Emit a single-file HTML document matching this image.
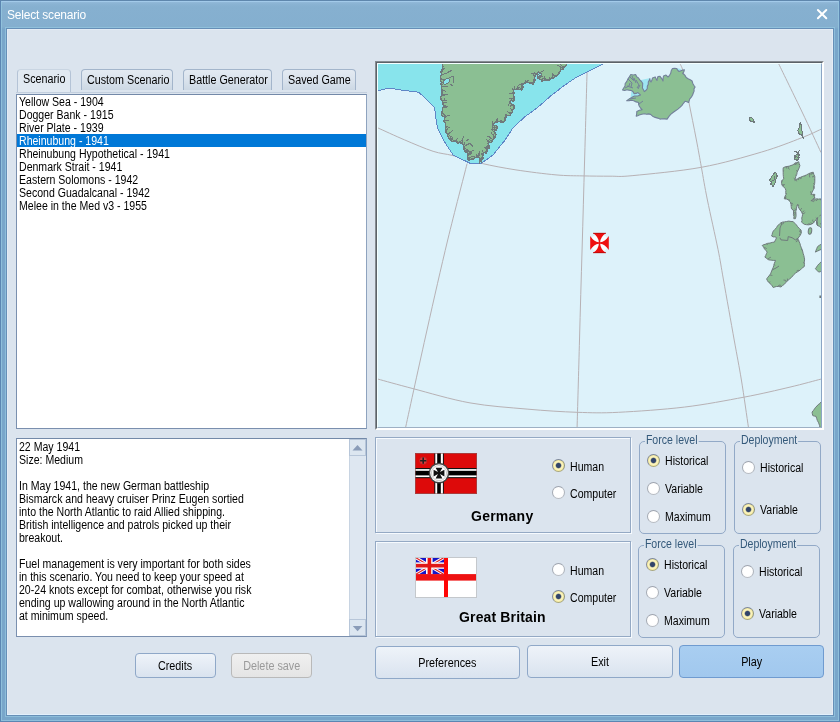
<!DOCTYPE html>
<html>
<head>
<meta charset="utf-8">
<title>Select scenario</title>
<style>
html,body{margin:0;padding:0;}
body{width:840px;height:722px;overflow:hidden;position:relative;background:#7ca6cb;font-family:"Liberation Sans",sans-serif;font-size:12px;line-height:13px;color:#000;letter-spacing:0;}
.abs{position:absolute;}
#frame{left:0;top:0;width:840px;height:722px;box-sizing:border-box;border:1px solid #5b86b2;border-top-color:#5f87ad;background:linear-gradient(180deg,#9dc4e6 0px,#92b9d9 1px,#8ab3d3 3px,#86b0d0 6px,#84afcf 26px,#79a6ca 28px,#79a6ca 100%);}
#frame-hl{left:1px;top:1px;width:838px;height:720px;box-sizing:border-box;border:1px solid rgba(150,200,225,0.75);border-top-color:rgba(170,210,240,0.6);}
#title{left:7px;top:8px;font-size:12px;line-height:15px;color:#fff;letter-spacing:-0.2px;white-space:nowrap;}
#client{left:7px;top:29px;width:826px;height:686px;background:#dbe4ee;box-shadow:0 0 0 1px #668fb7;box-sizing:border-box;border:1px solid #e3ecf5;border-bottom-color:#e2f0fc;}
#client-hl{left:7px;top:714px;width:826px;height:1px;background:#e2f0fc;}
#client-hr{left:832px;top:29px;width:1px;height:686px;background:#e6edf5;}
#frame-in{left:5px;top:27px;width:830px;height:690px;box-sizing:border-box;border:1px solid rgba(150,200,225,0.7);}
.tab{top:69px;height:21px;box-sizing:border-box;border:1px solid #a3b5cb;border-bottom:none;border-radius:4px 4px 0 0;background:linear-gradient(180deg,#e3eaf2 0%,#dae3ed 50%,#ccd8e4 100%);white-space:nowrap;}
.tab span{position:absolute;left:5px;top:4px;transform:scaleX(0.895);transform-origin:0 0;}
.tab.sel{top:69px;height:23px;background:#e1e9f1;border-color:#b4c3d6;border-top-color:#c9d5e2;}
.tab.sel span{top:3px;}
.box{background:#fff;box-sizing:border-box;border:1px solid #8ea3bf;border-top-color:#7389a8;border-left-color:#7a90af;border-bottom-color:#7a8fae;}
.row{left:0;width:349px;height:13px;line-height:15px;white-space:nowrap;padding-left:1.5px;box-sizing:border-box;}
.row.sel{background:#0078d7;color:#fff;}
.btn{box-sizing:border-box;border:1px solid #8fa8c8;border-radius:4px;background:linear-gradient(180deg,#eef3f9 0%,#e4ebf4 50%,#d9e3ef 100%);text-align:center;white-space:nowrap;}
.btn.dis{border-color:#b9b9b9;background:linear-gradient(180deg,#f0f0f0,#e4e4e4);color:#9a9a9a;}
.btn.def{border-color:#6f9bd0;background:linear-gradient(180deg,#a9cef1 0%,#a1c8ee 100%);}
.panel{box-sizing:border-box;border:1px solid #94a9c4;box-shadow:inset 1px 1px 0 0 #f6fafe,1px 1px 0 0 #f6fafe;}
.grp{box-sizing:border-box;border:1px solid #92a9c7;border-radius:5px;}
.grp .lbl{position:absolute;top:-8px;left:5px;padding:0 1px;transform:scaleX(0.88);transform-origin:0 0;background:#dbe4ee;color:#34597a;white-space:nowrap;}
.radio{width:13px;height:13px;box-sizing:border-box;border-radius:50%;border:1px solid #a4a9b2;border-color:#9ea4ae #aeb3ba #b8bcc2 #a4a9b2;background:radial-gradient(circle at 50% 45%,#ffffff 0%,#ffffff 55%,#f0f2f5 100%);}
.radio.on{border-color:#7d8798 #8e937f #a9a77e #84899a;background:radial-gradient(circle at 50% 50%,#31446a 0,#31446a 2.1px,#f7efb4 3.3px,#fbf4c0 4px,#f1e695 5.5px,#efe392 100%);}
.t{white-space:nowrap;transform:scaleX(0.88);transform-origin:0 0;}
.sx{display:inline-block;transform:scaleX(0.88);transform-origin:0 0;white-space:nowrap;}
.sc{display:inline-block;transform:scaleX(0.9);transform-origin:50% 0;white-space:nowrap;}
.bold{font-weight:bold;font-size:14px;line-height:16px;letter-spacing:0;white-space:nowrap;}
</style>
</head>
<body>
<div id="root" class="abs" style="left:0;top:0;width:840px;height:722px;will-change:transform;">
<div id="frame" class="abs"></div>
<div id="frame-hl" class="abs"></div>
<div id="title" class="abs">Select scenario</div>
<svg class="abs" style="left:816px;top:8px" width="13" height="13" viewBox="0 0 13 13"><path d="M1.9 2 L10.3 10.3 M10.3 2 L1.9 10.3" stroke="#fff" stroke-width="2" stroke-linecap="round" fill="none"/></svg>
<div id="frame-in" class="abs"></div>
<div id="client" class="abs"></div>
<div id="client-hl" class="abs"></div>
<div id="client-hr" class="abs"></div>

<!-- tabs -->
<div class="abs" style="left:16px;top:92px;width:351px;height:1px;background:#c3cfde"></div>
<div class="abs tab sel" style="left:17px;width:54px"><span>Scenario</span></div>
<div class="abs tab" style="left:81px;width:92px"><span>Custom Scenario</span></div>
<div class="abs tab" style="left:183px;width:89px"><span>Battle Generator</span></div>
<div class="abs tab" style="left:282px;width:74px"><span>Saved Game</span></div>

<!-- list -->
<div class="abs box" id="list" style="left:16px;top:94px;width:351px;height:335px;">
<div class="abs row" style="top:0"><span class="sx">Yellow Sea - 1904</span></div>
<div class="abs row" style="top:13px"><span class="sx">Dogger Bank - 1915</span></div>
<div class="abs row" style="top:26px"><span class="sx">River Plate - 1939</span></div>
<div class="abs row sel" style="top:39px"><span class="sx">Rheinubung - 1941</span></div>
<div class="abs row" style="top:52px"><span class="sx">Rheinubung Hypothetical - 1941</span></div>
<div class="abs row" style="top:65px"><span class="sx">Denmark Strait - 1941</span></div>
<div class="abs row" style="top:78px"><span class="sx">Eastern Solomons - 1942</span></div>
<div class="abs row" style="top:91px"><span class="sx">Second Guadalcanal - 1942</span></div>
<div class="abs row" style="top:104px"><span class="sx">Melee in the Med v3 - 1955</span></div>
</div>

<!-- description -->
<div class="abs box" id="desc" style="left:16px;top:438px;width:351px;height:199px;">
<div class="abs t" style="left:1.5px;top:2px;">22 May 1941<br>Size: Medium<br><br>In May 1941, the new German battleship<br>Bismarck and heavy cruiser Prinz Eugen sortied<br>into the North Atlantic to raid Allied shipping.<br>British intelligence and patrols picked up their<br>breakout.<br><br>Fuel management is very important for both sides<br>in this scenario. You need to keep your speed at<br>20-24 knots except for combat, otherwise you risk<br>ending up wallowing around in the North Atlantic<br>at minimum speed.</div>
<div class="abs" style="left:332px;top:0;width:17px;height:197px;background:#dee7f1;border-left:1px solid #c8d4e2;box-sizing:border-box;"></div>
<div class="abs" style="left:332px;top:0;width:17px;height:17px;background:#dce6f0;border:1px solid #b7c6d9;box-sizing:border-box;"></div>
<div class="abs" style="left:332px;top:180px;width:17px;height:17px;background:#dce6f0;border:1px solid #b7c6d9;box-sizing:border-box;"></div>
<svg class="abs" style="left:332px;top:0" width="17" height="197" viewBox="0 0 17 197"><path d="M3.5 11.5 L8.5 6 L13.5 11.5 Z" fill="#8a9cb8"/><path d="M3.8 187 L8.6 192.2 L13.4 187 Z" fill="#8a9cb8"/></svg>
</div>

<!-- small buttons -->
<div class="abs btn" style="left:135px;top:653px;width:81px;height:25px;line-height:25px;"><span class="sc">Credits</span></div>
<div class="abs btn dis" style="left:231px;top:653px;width:81px;height:25px;line-height:25px;"><span class="sc">Delete save</span></div>

<!-- MAP -->
<div class="abs" id="mapframe" style="left:375px;top:61px;width:449px;height:369px;box-sizing:border-box;border-top:1px solid #868c92;border-left:1px solid #868c92;border-right:1px solid #fff;border-bottom:1px solid #fff;"></div>
<div class="abs" style="left:376px;top:62px;width:447px;height:367px;box-sizing:border-box;border-top:1px solid #5c6268;border-left:1px solid #5c6268;border-right:1px solid #fff;border-bottom:1px solid #fff;"></div>
<div class="abs" style="left:377px;top:63px;width:445px;height:365px;box-sizing:border-box;border-top:1px solid #f4ffff;border-left:1px solid #f4ffff;border-right:1px solid #8ba5c5;border-bottom:1px solid #9db0c4;background:#ddf2fa"></div>
<svg class="abs" id="map" style="left:378px;top:64px" width="443" height="363" viewBox="378 64 443 363">
<!--MAPCONTENT-->
<path d="M467.1,163.6 C463.9,176.3 454.4,212.3 447.7,240.0 C441.0,267.7 434.0,298.8 427.0,330.0 C420.0,361.2 409.2,410.8 405.7,427.0" fill="none" stroke="#b7b1b4" stroke-width="1"/>
<path d="M587.3,64.0 C586.8,80.0 585.5,129.2 584.6,160.0 C583.7,190.8 583.0,219.0 582.1,249.0 C581.2,279.0 580.3,310.3 579.5,340.0 C578.7,369.7 577.5,412.5 577.1,427.0" fill="none" stroke="#b7b1b4" stroke-width="1"/>
<path d="M680.0,63.6 C680.6,65.2 682.1,66.8 683.5,73.0 C684.9,79.2 686.5,89.5 688.6,100.7 C690.8,111.9 694.3,128.9 696.4,140.0 C698.5,151.1 699.6,157.3 701.4,167.3 C703.2,177.3 704.6,186.3 707.4,200.0 C710.2,213.7 715.3,236.0 718.0,249.3 C720.7,262.6 720.8,264.9 723.5,280.0 C726.2,295.1 731.2,323.3 734.2,340.0 C737.2,356.7 739.0,365.5 741.4,380.0 C743.8,394.5 747.2,419.2 748.4,427.0" fill="none" stroke="#b7b1b4" stroke-width="1"/>
<path d="M778.6,63.6 C782.5,71.7 795.0,97.2 802.1,112.0 C809.2,126.8 817.9,145.8 821.0,152.5" fill="none" stroke="#b7b1b4" stroke-width="1"/>
<path d="M378.1,128.0 C382.5,130.0 395.4,136.0 404.6,139.9 C413.8,143.8 425.0,148.7 433.1,151.3 C441.2,153.9 445.0,153.6 453.1,155.6 C461.2,157.6 471.2,161.0 481.7,163.4 C492.2,165.8 503.6,168.0 516.0,169.9 C528.4,171.8 544.9,173.9 556.0,174.9 C567.1,175.9 573.9,175.7 582.9,175.9 C591.9,176.1 601.7,176.2 610.0,176.2 C618.3,176.1 617.7,177.1 632.9,175.6 C648.1,174.1 680.0,171.2 701.4,167.3 C722.8,163.4 744.7,157.0 761.4,152.1 C778.1,147.2 791.5,141.7 801.4,137.9 C811.3,134.1 817.7,130.7 821.0,129.3" fill="none" stroke="#b7b1b4" stroke-width="1"/>
<path d="M378.0,379.1 C383.8,380.7 397.6,384.6 412.9,388.6 C428.2,392.6 451.0,399.5 470.0,402.9 C489.0,406.3 509.2,407.5 527.1,409.1 C545.0,410.7 561.9,411.8 577.1,412.3 C592.4,412.8 600.7,413.2 618.6,412.3 C636.5,411.4 663.3,409.6 684.3,407.1 C705.2,404.6 726.7,400.4 744.3,397.1 C761.9,393.8 777.2,390.1 790.0,387.1 C802.8,384.1 815.8,380.4 821.0,379.1" fill="none" stroke="#b7b1b4" stroke-width="1"/>
<polygon points="378,64 378.0,90.6 388.9,88.1 400.3,89.9 418.9,92.3 434.6,107.4 436.0,119.1 437.7,128.4 444.6,142.0 453.1,154.9 467.4,162.0 469.6,163.1 481.7,163.1 493.1,154.9 496.0,151.3 504.6,140.6 513.1,127.7 524.6,117.0 537.4,107.7 550.3,96.3 563.1,86.3 574.6,78.4 587.4,72.0 603.1,64.0 603.1,64" fill="#88e4ec"/>
<polyline points="378.0,90.6 388.9,88.1 400.3,89.9 418.9,92.3 434.6,107.4 436.0,119.1 437.7,128.4 444.6,142.0 453.1,154.9 467.4,162.0 469.6,163.1 481.7,163.1 493.1,154.9 496.0,151.3 504.6,140.6 513.1,127.7 524.6,117.0 537.4,107.7 550.3,96.3 563.1,86.3 574.6,78.4 587.4,72.0 603.1,64.0" fill="none" stroke="#5f86c6" stroke-width="1" shape-rendering="crispEdges"/>
<g shape-rendering="crispEdges">
<polygon points="442.4,64.0 442.5,66.1 442.6,68.1 441.5,70.0 440.9,72.1 442.0,74.3 440.7,76.4 440.8,78.5 440.3,80.6 441.5,82.4 440.8,84.4 442.0,86.2 441.4,88.2 442.4,90.0 441.7,92.0 442.4,93.9 441.5,95.6 440.5,97.3 441.0,99.1 442.5,100.6 443.0,102.5 442.9,104.6 443.9,106.3 442.3,107.7 442.5,109.8 442.2,111.7 441.4,113.4 441.6,115.8 444.4,116.7 444.6,119.1 443.9,121.1 445.3,122.9 445.7,124.8 445.9,126.7 445.6,128.7 445.3,130.6 445.5,132.6 447.6,133.6 447.6,135.7 448.4,137.4 449.7,138.8 450.3,140.6 452.0,141.4 454.2,141.1 456.0,141.8 457.4,143.4 459.0,142.5 460.8,143.3 462.4,142.7 463.1,144.6 463.9,146.5 463.9,148.7 464.6,150.6 465.8,152.0 467.3,153.2 468.1,154.9 467.7,156.9 468.2,158.8 468.9,160.6 470.4,159.6 472.3,159.8 473.9,159.1 474.9,157.7 476.5,156.8 476.7,154.9 477.5,157.0 479.6,158.2 479.6,160.8 481.7,162.0 481.6,159.9 483.1,158.4 482.7,156.8 483.2,155.0 482.4,153.4 484.2,152.6 486.0,153.4 486.9,151.7 487.1,149.6 488.9,148.4 489.0,146.7 488.9,145.0 488.1,143.4 489.6,142.6 491.4,142.2 492.4,140.6 493.0,139.0 494.6,138.0 495.3,136.4 496.0,134.9 495.1,133.0 493.9,131.3 495.0,130.0 496.8,129.4 497.4,127.7 496.3,125.7 494.0,125.3 492.4,124.1 494.2,123.7 495.3,121.8 497.5,122.4 498.9,121.3 500.9,122.0 503.1,122.0 505.0,120.6 505.7,118.5 506.0,116.3 508.1,115.5 510.3,115.6 511.0,113.9 512.4,112.5 512.1,110.2 513.9,109.1 513.8,107.0 513.9,104.9 512.1,104.5 510.6,103.7 509.6,102.0 510.9,100.4 513.2,101.1 514.6,99.9 513.5,98.2 513.5,96.4 513.6,94.6 514.4,92.7 513.3,91.0 514.3,89.5 516.0,89.6 517.4,89.1 519.5,89.6 521.7,89.9 522.8,88.1 522.9,86.1 522.4,84.1 524.6,83.7 526.0,82.0 527.9,82.1 529.6,82.9 531.4,83.3 533.1,84.1 534.4,82.2 535.1,80.1 534.6,77.7 535.1,75.8 536.2,74.4 537.4,73.1 538.9,72.0 540.7,73.0 541.7,74.9 540.3,76.1 538.7,77.1 537.4,78.4 539.1,78.9 540.9,79.4 541.7,81.3 543.4,80.7 545.1,80.1 546.9,80.1 548.8,80.5 550.3,79.1 552.4,78.5 554.1,77.3 556.0,76.3 557.6,74.8 559.2,73.2 560.3,71.3 560.5,69.5 562.9,69.4 563.1,67.7 564.7,66.9 566.1,65.8 566.7,64.0" fill="#8bbf93"/>
<polyline points="442.4,64.0 442.5,66.1 442.6,68.1 441.5,70.0 440.9,72.1 442.0,74.3 440.7,76.4 440.8,78.5 440.3,80.6 441.5,82.4 440.8,84.4 442.0,86.2 441.4,88.2 442.4,90.0 441.7,92.0 442.4,93.9 441.5,95.6 440.5,97.3 441.0,99.1 442.5,100.6 443.0,102.5 442.9,104.6 443.9,106.3 442.3,107.7 442.5,109.8 442.2,111.7 441.4,113.4 441.6,115.8 444.4,116.7 444.6,119.1 443.9,121.1 445.3,122.9 445.7,124.8 445.9,126.7 445.6,128.7 445.3,130.6 445.5,132.6 447.6,133.6 447.6,135.7 448.4,137.4 449.7,138.8 450.3,140.6 452.0,141.4 454.2,141.1 456.0,141.8 457.4,143.4 459.0,142.5 460.8,143.3 462.4,142.7 463.1,144.6 463.9,146.5 463.9,148.7 464.6,150.6 465.8,152.0 467.3,153.2 468.1,154.9 467.7,156.9 468.2,158.8 468.9,160.6 470.4,159.6 472.3,159.8 473.9,159.1 474.9,157.7 476.5,156.8 476.7,154.9 477.5,157.0 479.6,158.2 479.6,160.8 481.7,162.0 481.6,159.9 483.1,158.4 482.7,156.8 483.2,155.0 482.4,153.4 484.2,152.6 486.0,153.4 486.9,151.7 487.1,149.6 488.9,148.4 489.0,146.7 488.9,145.0 488.1,143.4 489.6,142.6 491.4,142.2 492.4,140.6 493.0,139.0 494.6,138.0 495.3,136.4 496.0,134.9 495.1,133.0 493.9,131.3 495.0,130.0 496.8,129.4 497.4,127.7 496.3,125.7 494.0,125.3 492.4,124.1 494.2,123.7 495.3,121.8 497.5,122.4 498.9,121.3 500.9,122.0 503.1,122.0 505.0,120.6 505.7,118.5 506.0,116.3 508.1,115.5 510.3,115.6 511.0,113.9 512.4,112.5 512.1,110.2 513.9,109.1 513.8,107.0 513.9,104.9 512.1,104.5 510.6,103.7 509.6,102.0 510.9,100.4 513.2,101.1 514.6,99.9 513.5,98.2 513.5,96.4 513.6,94.6 514.4,92.7 513.3,91.0 514.3,89.5 516.0,89.6 517.4,89.1 519.5,89.6 521.7,89.9 522.8,88.1 522.9,86.1 522.4,84.1 524.6,83.7 526.0,82.0 527.9,82.1 529.6,82.9 531.4,83.3 533.1,84.1 534.4,82.2 535.1,80.1 534.6,77.7 535.1,75.8 536.2,74.4 537.4,73.1 538.9,72.0 540.7,73.0 541.7,74.9 540.3,76.1 538.7,77.1 537.4,78.4 539.1,78.9 540.9,79.4 541.7,81.3 543.4,80.7 545.1,80.1 546.9,80.1 548.8,80.5 550.3,79.1 552.4,78.5 554.1,77.3 556.0,76.3 557.6,74.8 559.2,73.2 560.3,71.3 560.5,69.5 562.9,69.4 563.1,67.7 564.7,66.9 566.1,65.8 566.7,64.0" fill="none" stroke="#6f7a7c" stroke-width="1.4" stroke-linejoin="round"/>
<polyline points="442.5,67.1 444.3,66.7" fill="none" stroke="#6f7a7c" stroke-width="1"/>
<polyline points="442.0,69.1 444.2,68.5 445.0,67.8" fill="none" stroke="#6f7a7c" stroke-width="1"/>
<polyline points="441.2,71.0 443.0,70.4 443.1,68.1" fill="none" stroke="#6f7a7c" stroke-width="1"/>
<polyline points="441.4,73.2 442.6,71.1 442.8,70.0" fill="none" stroke="#6f7a7c" stroke-width="1"/>
<polyline points="440.6,79.6 442.3,80.0 443.7,79.7" fill="none" stroke="#6f7a7c" stroke-width="1"/>
<polyline points="441.1,83.4 445.4,81.1" fill="none" stroke="#6f7a7c" stroke-width="1"/>
<polyline points="441.4,85.3 442.7,84.5" fill="none" stroke="#6f7a7c" stroke-width="1"/>
<polyline points="442.1,91.0 444.8,90.7 446.3,91.7" fill="none" stroke="#6f7a7c" stroke-width="1"/>
<polyline points="442.0,94.7 446.3,94.7" fill="none" stroke="#6f7a7c" stroke-width="1"/>
<polyline points="442.8,101.5 445.1,99.2 444.8,98.3" fill="none" stroke="#6f7a7c" stroke-width="1"/>
<polyline points="443.0,103.5 446.6,102.1" fill="none" stroke="#6f7a7c" stroke-width="1"/>
<polyline points="443.4,105.5 448.2,106.7" fill="none" stroke="#6f7a7c" stroke-width="1"/>
<polyline points="443.1,107.0 445.3,107.7 447.1,107.0" fill="none" stroke="#6f7a7c" stroke-width="1"/>
<polyline points="441.8,112.6 445.0,115.4 446.0,117.6" fill="none" stroke="#6f7a7c" stroke-width="1"/>
<polyline points="444.5,117.9 447.9,115.3 450.3,115.4" fill="none" stroke="#6f7a7c" stroke-width="1"/>
<polyline points="444.3,120.1 449.0,120.8" fill="none" stroke="#6f7a7c" stroke-width="1"/>
<polyline points="444.6,122.0 445.1,120.0" fill="none" stroke="#6f7a7c" stroke-width="1"/>
<polyline points="445.8,125.8 450.2,128.1" fill="none" stroke="#6f7a7c" stroke-width="1"/>
<polyline points="445.8,127.7 447.7,128.2 448.0,130.1" fill="none" stroke="#6f7a7c" stroke-width="1"/>
<polyline points="445.5,129.6 447.2,132.1" fill="none" stroke="#6f7a7c" stroke-width="1"/>
<polyline points="446.6,133.1 446.6,130.6 446.9,129.2" fill="none" stroke="#6f7a7c" stroke-width="1"/>
<polyline points="447.6,134.6 451.2,131.7 452.6,130.4" fill="none" stroke="#6f7a7c" stroke-width="1"/>
<polyline points="449.0,138.1 452.3,138.1" fill="none" stroke="#6f7a7c" stroke-width="1"/>
<polyline points="450.0,139.7 451.2,136.9 449.6,135.4" fill="none" stroke="#6f7a7c" stroke-width="1"/>
<polyline points="451.2,141.0 452.7,137.3" fill="none" stroke="#6f7a7c" stroke-width="1"/>
<polyline points="453.1,141.3 452.8,137.8" fill="none" stroke="#6f7a7c" stroke-width="1"/>
<polyline points="455.1,141.5 456.2,139.4 457.8,138.6" fill="none" stroke="#6f7a7c" stroke-width="1"/>
<polyline points="456.7,142.6 461.2,141.4" fill="none" stroke="#6f7a7c" stroke-width="1"/>
<polyline points="458.2,143.0 456.6,140.1" fill="none" stroke="#6f7a7c" stroke-width="1"/>
<polyline points="459.9,142.9 461.3,140.1" fill="none" stroke="#6f7a7c" stroke-width="1"/>
<polyline points="461.6,143.0 463.0,138.4 464.1,136.3" fill="none" stroke="#6f7a7c" stroke-width="1"/>
<polyline points="463.5,145.6 465.0,142.9 464.8,141.8" fill="none" stroke="#6f7a7c" stroke-width="1"/>
<polyline points="463.9,147.6 467.9,149.9 468.9,151.6" fill="none" stroke="#6f7a7c" stroke-width="1"/>
<polyline points="464.2,149.6 468.9,151.2 469.1,152.8" fill="none" stroke="#6f7a7c" stroke-width="1"/>
<polyline points="465.2,151.3 469.6,151.9 471.4,151.9" fill="none" stroke="#6f7a7c" stroke-width="1"/>
<polyline points="466.6,152.6 467.0,150.0" fill="none" stroke="#6f7a7c" stroke-width="1"/>
<polyline points="467.7,154.0 470.5,153.0 472.0,151.7" fill="none" stroke="#6f7a7c" stroke-width="1"/>
<polyline points="467.9,155.9 472.0,153.1" fill="none" stroke="#6f7a7c" stroke-width="1"/>
<polyline points="468.5,159.7 469.7,158.5" fill="none" stroke="#6f7a7c" stroke-width="1"/>
<polyline points="469.7,160.1 466.8,159.2" fill="none" stroke="#6f7a7c" stroke-width="1"/>
<polyline points="473.1,159.4 469.1,156.9" fill="none" stroke="#6f7a7c" stroke-width="1"/>
<polyline points="474.4,158.4 472.7,158.6" fill="none" stroke="#6f7a7c" stroke-width="1"/>
<polyline points="475.7,157.2 471.0,156.1" fill="none" stroke="#6f7a7c" stroke-width="1"/>
<polyline points="477.1,155.9 478.8,156.4" fill="none" stroke="#6f7a7c" stroke-width="1"/>
<polyline points="478.6,157.6 479.4,154.2" fill="none" stroke="#6f7a7c" stroke-width="1"/>
<polyline points="479.6,159.5 482.2,157.4 482.2,156.2" fill="none" stroke="#6f7a7c" stroke-width="1"/>
<polyline points="480.6,161.4 480.6,158.8 481.4,157.6" fill="none" stroke="#6f7a7c" stroke-width="1"/>
<polyline points="481.7,160.9 479.4,162.5 479.1,163.5" fill="none" stroke="#6f7a7c" stroke-width="1"/>
<polyline points="482.4,159.1 481.0,157.5" fill="none" stroke="#6f7a7c" stroke-width="1"/>
<polyline points="482.9,155.9 481.0,153.6" fill="none" stroke="#6f7a7c" stroke-width="1"/>
<polyline points="483.3,153.0 481.8,149.4" fill="none" stroke="#6f7a7c" stroke-width="1"/>
<polyline points="485.1,153.0 488.4,150.9" fill="none" stroke="#6f7a7c" stroke-width="1"/>
<polyline points="486.5,152.6 484.8,152.2 483.3,153.7" fill="none" stroke="#6f7a7c" stroke-width="1"/>
<polyline points="487.0,150.6 485.5,151.6" fill="none" stroke="#6f7a7c" stroke-width="1"/>
<polyline points="488.9,147.5 486.7,148.3 485.6,148.8" fill="none" stroke="#6f7a7c" stroke-width="1"/>
<polyline points="489.0,145.8 484.6,148.0" fill="none" stroke="#6f7a7c" stroke-width="1"/>
<polyline points="488.5,144.2 485.7,148.2 485.4,149.1" fill="none" stroke="#6f7a7c" stroke-width="1"/>
<polyline points="488.9,143.0 487.2,140.2 486.7,139.3" fill="none" stroke="#6f7a7c" stroke-width="1"/>
<polyline points="490.5,142.4 488.2,140.7 486.9,141.4" fill="none" stroke="#6f7a7c" stroke-width="1"/>
<polyline points="491.9,141.4 489.3,139.3" fill="none" stroke="#6f7a7c" stroke-width="1"/>
<polyline points="492.7,139.8 489.2,136.8 486.8,136.1" fill="none" stroke="#6f7a7c" stroke-width="1"/>
<polyline points="493.8,138.5 493.2,134.8 494.7,132.9" fill="none" stroke="#6f7a7c" stroke-width="1"/>
<polyline points="494.9,137.2 492.1,133.9 491.0,132.5" fill="none" stroke="#6f7a7c" stroke-width="1"/>
<polyline points="494.4,130.7 493.9,126.8" fill="none" stroke="#6f7a7c" stroke-width="1"/>
<polyline points="495.9,129.7 494.1,129.0 492.2,130.2" fill="none" stroke="#6f7a7c" stroke-width="1"/>
<polyline points="497.1,128.6 494.0,126.5" fill="none" stroke="#6f7a7c" stroke-width="1"/>
<polyline points="496.9,126.7 496.1,130.9" fill="none" stroke="#6f7a7c" stroke-width="1"/>
<polyline points="495.2,125.5 494.3,129.2 493.4,130.2" fill="none" stroke="#6f7a7c" stroke-width="1"/>
<polyline points="493.2,124.7 492.3,128.7 490.5,130.4" fill="none" stroke="#6f7a7c" stroke-width="1"/>
<polyline points="493.3,123.9 492.0,121.0" fill="none" stroke="#6f7a7c" stroke-width="1"/>
<polyline points="496.4,122.1 497.2,120.6 497.1,118.5" fill="none" stroke="#6f7a7c" stroke-width="1"/>
<polyline points="498.2,121.9 497.4,120.5 495.6,119.6" fill="none" stroke="#6f7a7c" stroke-width="1"/>
<polyline points="499.9,121.6 501.4,119.6" fill="none" stroke="#6f7a7c" stroke-width="1"/>
<polyline points="502.0,122.0 501.9,120.1" fill="none" stroke="#6f7a7c" stroke-width="1"/>
<polyline points="504.1,121.3 505.2,116.6 505.5,114.4" fill="none" stroke="#6f7a7c" stroke-width="1"/>
<polyline points="505.8,117.4 503.7,118.0" fill="none" stroke="#6f7a7c" stroke-width="1"/>
<polyline points="507.0,115.9 506.6,113.9" fill="none" stroke="#6f7a7c" stroke-width="1"/>
<polyline points="510.6,114.7 508.7,112.1" fill="none" stroke="#6f7a7c" stroke-width="1"/>
<polyline points="511.7,113.2 507.3,111.6" fill="none" stroke="#6f7a7c" stroke-width="1"/>
<polyline points="512.3,111.4 510.6,114.2" fill="none" stroke="#6f7a7c" stroke-width="1"/>
<polyline points="513.0,109.7 510.5,108.7 510.1,107.7" fill="none" stroke="#6f7a7c" stroke-width="1"/>
<polyline points="513.0,104.7 509.7,107.0" fill="none" stroke="#6f7a7c" stroke-width="1"/>
<polyline points="511.3,104.1 510.5,106.8" fill="none" stroke="#6f7a7c" stroke-width="1"/>
<polyline points="510.1,102.8 507.9,104.9 508.3,106.0" fill="none" stroke="#6f7a7c" stroke-width="1"/>
<polyline points="512.0,100.8 514.1,99.7 515.3,99.1" fill="none" stroke="#6f7a7c" stroke-width="1"/>
<polyline points="513.9,100.5 514.4,96.0" fill="none" stroke="#6f7a7c" stroke-width="1"/>
<polyline points="514.1,99.1 509.3,98.2" fill="none" stroke="#6f7a7c" stroke-width="1"/>
<polyline points="513.5,97.3 510.7,100.3" fill="none" stroke="#6f7a7c" stroke-width="1"/>
<polyline points="514.0,93.6 512.3,93.6" fill="none" stroke="#6f7a7c" stroke-width="1"/>
<polyline points="513.8,91.8 511.6,93.4 509.2,93.5" fill="none" stroke="#6f7a7c" stroke-width="1"/>
<polyline points="513.8,90.3 512.1,88.3" fill="none" stroke="#6f7a7c" stroke-width="1"/>
<polyline points="515.1,89.6 514.1,87.8 514.8,86.2" fill="none" stroke="#6f7a7c" stroke-width="1"/>
<polyline points="516.7,89.4 518.5,84.7" fill="none" stroke="#6f7a7c" stroke-width="1"/>
<polyline points="518.5,89.4 517.9,87.6 516.6,87.3" fill="none" stroke="#6f7a7c" stroke-width="1"/>
<polyline points="520.6,89.8 521.8,85.3" fill="none" stroke="#6f7a7c" stroke-width="1"/>
<polyline points="522.2,89.0 519.1,87.8 518.0,87.8" fill="none" stroke="#6f7a7c" stroke-width="1"/>
<polyline points="522.8,87.1 521.6,85.6" fill="none" stroke="#6f7a7c" stroke-width="1"/>
<polyline points="522.6,85.1 520.6,84.2 519.0,84.5" fill="none" stroke="#6f7a7c" stroke-width="1"/>
<polyline points="523.5,83.9 526.2,80.4" fill="none" stroke="#6f7a7c" stroke-width="1"/>
<polyline points="525.3,82.9 521.4,83.5" fill="none" stroke="#6f7a7c" stroke-width="1"/>
<polyline points="527.0,82.0 527.2,80.6 529.3,79.8" fill="none" stroke="#6f7a7c" stroke-width="1"/>
<polyline points="532.3,83.7 531.8,81.7" fill="none" stroke="#6f7a7c" stroke-width="1"/>
<polyline points="533.8,83.1 533.0,79.2" fill="none" stroke="#6f7a7c" stroke-width="1"/>
<polyline points="534.8,78.9 533.2,79.1" fill="none" stroke="#6f7a7c" stroke-width="1"/>
<polyline points="534.8,76.8 532.8,73.6 531.4,73.5" fill="none" stroke="#6f7a7c" stroke-width="1"/>
<polyline points="535.6,75.1 534.7,73.5 533.8,71.8" fill="none" stroke="#6f7a7c" stroke-width="1"/>
<polyline points="536.8,73.7 533.2,73.0 531.6,73.4" fill="none" stroke="#6f7a7c" stroke-width="1"/>
<polyline points="539.8,72.5 542.8,71.4 544.2,69.4" fill="none" stroke="#6f7a7c" stroke-width="1"/>
<polyline points="541.2,74.0 542.3,72.8" fill="none" stroke="#6f7a7c" stroke-width="1"/>
<polyline points="541.0,75.5 542.8,77.1" fill="none" stroke="#6f7a7c" stroke-width="1"/>
<polyline points="538.1,77.7 540.7,77.6" fill="none" stroke="#6f7a7c" stroke-width="1"/>
<polyline points="538.3,78.7 537.2,74.5" fill="none" stroke="#6f7a7c" stroke-width="1"/>
<polyline points="540.0,79.2 538.8,74.4 539.4,73.3" fill="none" stroke="#6f7a7c" stroke-width="1"/>
<polyline points="541.3,80.4 543.8,80.5" fill="none" stroke="#6f7a7c" stroke-width="1"/>
<polyline points="542.5,81.0 540.7,79.6" fill="none" stroke="#6f7a7c" stroke-width="1"/>
<polyline points="544.2,80.4 545.2,78.6 544.7,76.2" fill="none" stroke="#6f7a7c" stroke-width="1"/>
<polyline points="546.0,80.1 544.7,79.0 545.1,76.7" fill="none" stroke="#6f7a7c" stroke-width="1"/>
<polyline points="547.9,80.3 552.1,78.1 552.9,75.9" fill="none" stroke="#6f7a7c" stroke-width="1"/>
<polyline points="549.6,79.8 545.7,79.9 544.3,80.4" fill="none" stroke="#6f7a7c" stroke-width="1"/>
<polyline points="551.3,78.8 549.1,77.8 549.0,76.6" fill="none" stroke="#6f7a7c" stroke-width="1"/>
<polyline points="555.1,76.8 552.1,73.5" fill="none" stroke="#6f7a7c" stroke-width="1"/>
<polyline points="556.8,75.6 553.7,75.5 553.0,74.4" fill="none" stroke="#6f7a7c" stroke-width="1"/>
<polyline points="558.4,74.0 558.3,72.4" fill="none" stroke="#6f7a7c" stroke-width="1"/>
<polyline points="561.7,69.5 560.4,68.3" fill="none" stroke="#6f7a7c" stroke-width="1"/>
<polyline points="563.0,68.6 559.1,66.0 556.7,65.9" fill="none" stroke="#6f7a7c" stroke-width="1"/>
<polyline points="563.9,67.3 560.8,64.8 559.8,64.6" fill="none" stroke="#6f7a7c" stroke-width="1"/>
<ellipse cx="446.3" cy="81.5" rx="3.6" ry="2.2" transform="rotate(-30 446.3 81.5)" fill="#88e4ec" stroke="#6f7a7c" stroke-width="1"/>
<polyline points="441.0,75.0 447.0,73.0 452.0,70.0" fill="none" stroke="#6f7a7c" stroke-width="1.1"/>
<polyline points="449.0,78.0 453.0,76.0 454.0,83.0" fill="none" stroke="#6f7a7c" stroke-width="1.1"/>
<polyline points="450.0,84.0 453.0,86.0" fill="none" stroke="#6f7a7c" stroke-width="1.1"/>
<polyline points="441.0,86.0 448.0,87.0" fill="none" stroke="#6f7a7c" stroke-width="1.1"/>
<polyline points="442.0,96.0 448.0,94.0" fill="none" stroke="#6f7a7c" stroke-width="1.1"/>
<polyline points="441.0,100.0 447.0,101.0" fill="none" stroke="#6f7a7c" stroke-width="1.1"/>
<polyline points="465.0,146.0 470.0,143.0 473.0,147.0" fill="none" stroke="#6f7a7c" stroke-width="1.1"/>
<polyline points="466.0,141.0 469.0,139.0" fill="none" stroke="#6f7a7c" stroke-width="1.1"/>
<polyline points="470.0,152.0 474.0,150.0" fill="none" stroke="#6f7a7c" stroke-width="1.1"/>
<polyline points="478.0,156.0 480.0,151.0" fill="none" stroke="#6f7a7c" stroke-width="1.1"/>
<polyline points="551.0,79.0 554.0,74.0" fill="none" stroke="#6f7a7c" stroke-width="1.1"/>
<polyline points="540.0,80.0 545.0,78.0" fill="none" stroke="#6f7a7c" stroke-width="1.1"/>
</g>
<polygon points="641,80 650.5,78 650,84 647,92 642,92.5 641.5,86" fill="#9fe6f2"/>
<polygon points="631.5,90.5 638.5,92 641,95.5 634.6,96.5 630.5,98" fill="#9fe6f2"/>
<polygon points="676,68 681,69 680,73 676,72" fill="#9fe6f2"/>
<polygon points="622.5,90.0 623.7,88.0 625.0,86.0 625.2,83.5 626.7,81.6 627.8,79.1 629.4,76.9 630.8,74.5 633.2,75.0 635.6,74.5 636.6,76.6 638.5,78.0 639.8,79.9 641.4,81.5 642.7,83.4 642.6,85.7 642.4,88.0 643.4,89.8 644.3,91.6 646.1,90.3 647.3,88.5 647.3,86.3 648.3,84.2 648.3,82.0 649.3,80.4 649.8,78.7 650.1,80.5 651.0,82.0 652.0,80.1 652.5,78.0 655.2,76.9 656.0,78.7 657.0,80.5 657.3,78.5 658.0,76.5 660.0,76.3 661.7,78.6 663.0,81.0 663.1,78.5 663.5,76.0 666.0,75.1 668.0,77.0 669.6,75.3 670.7,73.3 671.2,70.8 672.5,68.5 674.6,68.2 676.7,68.5 677.6,70.2 679.0,71.5 681.6,70.4 684.4,69.7 683.9,71.7 682.6,73.3 684.8,75.1 686.2,77.5 688.1,78.7 690.2,79.7 692.1,81.0 692.7,83.2 693.8,85.2 695.1,87.0 694.0,88.9 694.1,91.1 693.3,93.0 692.5,95.2 691.3,97.1 689.8,98.9 689.2,100.7 688.6,102.5 686.9,101.7 685.0,101.3 683.4,103.3 682.0,105.4 680.2,107.2 677.9,109.1 675.5,110.8 673.0,112.5 670.7,114.4 668.8,116.6 667.1,119.1 664.7,118.9 662.4,118.8 660.0,119.1 657.7,118.1 655.2,117.4 652.6,116.2 650.5,114.4 648.5,113.9 646.5,114.2 644.5,113.8 641.8,114.3 639.2,115.0 637.7,115.7 636.2,116.2 636.7,113.8 636.8,111.4 639.4,110.2 642.1,109.6 640.5,108.0 639.2,106.0 638.6,104.3 638.6,102.5 636.1,101.9 633.8,100.7 631.4,100.3 629.1,100.6 626.7,100.7 629.0,99.1 631.4,97.7 633.0,96.8 634.6,96.0 637.6,96.0 640.5,95.0 639.3,93.8 638.0,92.6 636.1,93.4 634.0,93.6 633.3,92.0 632.0,90.8 630.5,90.4 629.0,90.3 626.9,89.7 624.6,90.5" fill="#8bbf93" stroke="#73809a" stroke-width="1.1" stroke-linejoin="round"/>
<polyline points="628.0,79.0 632.0,83.0 631.0,87.0" fill="none" stroke="#73809a" stroke-width="1"/>
<polyline points="634.0,78.0 636.0,83.0" fill="none" stroke="#73809a" stroke-width="1"/>
<polyline points="627.0,86.0 633.0,88.0" fill="none" stroke="#73809a" stroke-width="1"/>
<polyline points="639.0,104.0 643.0,101.0" fill="none" stroke="#73809a" stroke-width="1"/>
<polyline points="630.0,99.0 636.0,98.0" fill="none" stroke="#73809a" stroke-width="1"/>
<polyline points="630.0,77.0 633.0,80.0" fill="none" stroke="#73809a" stroke-width="1"/>
<polyline points="625.0,88.0 629.0,86.0 630.0,83.0" fill="none" stroke="#73809a" stroke-width="1"/>
<polyline points="636.0,80.0 639.0,85.0 637.0,88.0" fill="none" stroke="#73809a" stroke-width="1"/>
<polyline points="632.0,76.0 634.0,81.0" fill="none" stroke="#73809a" stroke-width="1"/>
<polyline points="640.0,85.0 638.0,89.0" fill="none" stroke="#73809a" stroke-width="1"/>
<g shape-rendering="crispEdges">
<polygon points="749.4,118.0 751.0,117.0 752.0,118.0 753.0,119.0 753.6,120.8 754.4,122.5 752.5,121.5 751.3,121.1 750.0,121.0 749.9,119.5" fill="#8bbf93" stroke="#6f7a7c" stroke-width="1.1" stroke-linejoin="round"/>
<polygon points="800.3,123.0 801.0,124.4 801.2,126.0 801.2,127.5 801.0,129.0 801.9,130.4 802.3,132.0 802.6,133.5 802.6,135.0 802.9,136.9 803.7,138.6 803.1,137.5 802.4,136.5 801.9,135.5 801.0,134.8 799.5,134.2 798.8,133.4 798.2,132.5 798.1,131.4 797.6,130.5 798.8,129.5 799.0,128.0 799.2,126.5 799.6,124.7" fill="#8bbf93" stroke="#6f7a7c" stroke-width="1.1" stroke-linejoin="round"/>
<polygon points="794.2,155.2 795.6,155.1 797.0,154.6 799.3,154.2 798.9,155.9 799.0,157.6 798.5,159.0 797.5,160.2 796.2,159.9 794.8,159.8 795.0,157.5" fill="#8bbf93" stroke="#6f7a7c" stroke-width="1.1" stroke-linejoin="round"/>
<polyline points="794.5,151.2 796.5,152 798,153.5 799.5,150.3" fill="none" stroke="#6f7a7c" stroke-width="1"/>
<polyline points="795.5,156 798.5,158.5" fill="none" stroke="#6f7a7c" stroke-width="1"/>
<polygon points="769.4,180.5 770.3,179.3 771.0,178.0 771.6,176.7 772.5,175.5 773.2,174.5 774.0,173.5 775.5,172.2 776.2,173.0 776.6,174.0 777.0,175.2 777.0,176.5 776.6,177.8 776.0,179.0 775.7,180.5 775.5,182.0 774.8,183.2 774.2,184.5 773.9,185.6 773.3,186.6 772.2,185.3 771.0,184.4 771.0,183.1 771.5,182.0 770.4,181.3" fill="#8bbf93" stroke="#6f7a7c" stroke-width="1.1" stroke-linejoin="round"/>
<polyline points="772,181 774.5,179.5 775,176" fill="none" stroke="#6f7a7c" stroke-width="1"/>
</g>
<polygon points="798.7,161.7 799.2,163.6 799.9,165.5 799.2,167.8 798.2,170.0 797.1,172.2 796.8,174.3 795.8,176.3 795.4,178.4 794.9,180.5 796.1,179.4 797.6,178.8 799.0,177.8 800.6,177.3 802.1,176.6 804.3,175.8 806.6,174.9 808.6,173.7 810.9,172.8 813.2,172.2 813.9,174.5 814.8,176.6 814.8,178.8 814.8,181.0 814.7,183.3 814.0,185.5 814.3,187.7 813.6,189.4 812.6,191.0 811.9,192.8 810.9,194.4 812.8,194.3 814.8,194.4 814.5,196.3 814.8,198.2 812.6,199.3 810.9,201.0 812.7,200.2 814.5,199.3 816.5,198.8 818.7,199.1 820.9,198.9 823.0,199.3 823.4,201.7 822.7,204.1 823.1,206.5 822.7,208.9 823.1,211.3 822.7,213.7 823.0,216.0 823.3,218.4 823.4,220.8 823.0,223.2 822.9,225.6 823.0,228.0 820.9,227.6 819.4,226.3 817.5,225.5 816.7,223.9 816.5,222.1 817.1,219.9 817.6,217.6 816.2,219.5 814.7,221.3 813.2,223.2 811.0,224.3 808.7,224.8 806.5,224.7 804.3,224.3 802.9,223.2 801.5,222.1 802.1,220.2 801.7,218.2 802.3,216.2 802.6,214.3 801.9,212.7 801.1,211.2 799.9,209.9 798.9,208.1 798.1,206.3 797.6,204.3 796.7,206.5 796.5,208.8 795.8,211.2 796.0,213.8 796.0,216.3 795.4,218.7 793.8,218.7 794.0,216.5 793.4,214.3 793.7,212.1 793.2,209.9 791.5,208.8 791.2,206.6 791.0,204.3 790.4,202.1 789.4,201.2 788.8,199.9 786.6,199.1 784.3,198.8 784.9,196.5 786.0,194.4 785.7,192.5 785.9,190.6 785.4,188.8 783.9,187.0 782.1,185.5 781.6,183.3 781.6,181.1 782.5,179.8 783.8,178.8 783.4,176.6 783.2,174.4 783.2,172.2 783.1,170.0 783.2,167.8 785.1,166.9 787.0,166.5 789.1,166.2 791.0,165.5 793.1,164.8 794.7,163.3 796.8,162.7" fill="#8bbf93" stroke="#6f7a7c" stroke-width="1.0" stroke-linejoin="round"/>
<polyline points="799.5,164.6 798.6,164.4" fill="none" stroke="#6f7a7c" stroke-width="0.9"/>
<polyline points="797.6,171.1 796.1,170.6" fill="none" stroke="#6f7a7c" stroke-width="0.9"/>
<polyline points="796.3,175.3 795.5,175.0" fill="none" stroke="#6f7a7c" stroke-width="0.9"/>
<polyline points="795.2,179.5 793.7,178.2" fill="none" stroke="#6f7a7c" stroke-width="0.9"/>
<polyline points="795.5,179.9 796.2,180.6 797.1,181.2" fill="none" stroke="#6f7a7c" stroke-width="0.9"/>
<polyline points="796.8,179.1 797.1,179.9" fill="none" stroke="#6f7a7c" stroke-width="0.9"/>
<polyline points="798.3,178.3 798.7,180.1" fill="none" stroke="#6f7a7c" stroke-width="0.9"/>
<polyline points="799.8,177.5 800.2,178.8" fill="none" stroke="#6f7a7c" stroke-width="0.9"/>
<polyline points="801.3,176.9 800.8,179.1" fill="none" stroke="#6f7a7c" stroke-width="0.9"/>
<polyline points="805.5,175.4 804.7,176.6" fill="none" stroke="#6f7a7c" stroke-width="0.9"/>
<polyline points="809.8,173.2 809.4,175.3 809.8,177.4" fill="none" stroke="#6f7a7c" stroke-width="0.9"/>
<polyline points="812.0,172.5 811.5,173.6" fill="none" stroke="#6f7a7c" stroke-width="0.9"/>
<polyline points="813.5,173.3 811.5,173.9 810.4,175.2" fill="none" stroke="#6f7a7c" stroke-width="0.9"/>
<polyline points="814.3,175.5 814.0,176.5 812.0,176.9" fill="none" stroke="#6f7a7c" stroke-width="0.9"/>
<polyline points="814.8,179.9 813.9,179.5" fill="none" stroke="#6f7a7c" stroke-width="0.9"/>
<polyline points="814.3,184.4 813.4,183.1" fill="none" stroke="#6f7a7c" stroke-width="0.9"/>
<polyline points="813.9,188.6 813.5,187.0 814.0,185.7" fill="none" stroke="#6f7a7c" stroke-width="0.9"/>
<polyline points="811.4,193.6 810.6,192.4 810.6,191.3" fill="none" stroke="#6f7a7c" stroke-width="0.9"/>
<polyline points="813.8,194.4 813.2,196.5" fill="none" stroke="#6f7a7c" stroke-width="0.9"/>
<polyline points="814.7,197.2 814.2,198.0 813.0,199.1" fill="none" stroke="#6f7a7c" stroke-width="0.9"/>
<polyline points="811.8,200.6 813.2,201.6 814.5,200.8" fill="none" stroke="#6f7a7c" stroke-width="0.9"/>
<polyline points="813.6,199.7 814.4,200.6" fill="none" stroke="#6f7a7c" stroke-width="0.9"/>
<polyline points="817.6,199.0 817.0,200.3 815.7,200.5" fill="none" stroke="#6f7a7c" stroke-width="0.9"/>
<polyline points="819.8,199.0 821.0,200.2" fill="none" stroke="#6f7a7c" stroke-width="0.9"/>
<polyline points="823.2,200.5 822.5,200.9" fill="none" stroke="#6f7a7c" stroke-width="0.9"/>
<polyline points="822.9,205.3 821.5,205.1" fill="none" stroke="#6f7a7c" stroke-width="0.9"/>
<polyline points="822.9,210.1 822.2,209.6" fill="none" stroke="#6f7a7c" stroke-width="0.9"/>
<polyline points="822.9,212.5 822.0,212.7" fill="none" stroke="#6f7a7c" stroke-width="0.9"/>
<polyline points="822.9,214.8 820.7,214.9 819.4,216.3" fill="none" stroke="#6f7a7c" stroke-width="0.9"/>
<polyline points="822.9,224.4 821.8,224.8 820.0,223.5" fill="none" stroke="#6f7a7c" stroke-width="0.9"/>
<polyline points="822.0,227.8 823.3,226.5" fill="none" stroke="#6f7a7c" stroke-width="0.9"/>
<polyline points="817.1,224.7 817.5,223.7 817.5,221.5" fill="none" stroke="#6f7a7c" stroke-width="0.9"/>
<polyline points="816.9,218.6 815.8,217.6" fill="none" stroke="#6f7a7c" stroke-width="0.9"/>
<polyline points="813.9,222.3 812.6,220.6 812.9,219.6" fill="none" stroke="#6f7a7c" stroke-width="0.9"/>
<polyline points="812.1,223.7 810.6,222.6" fill="none" stroke="#6f7a7c" stroke-width="0.9"/>
<polyline points="807.6,224.8 808.4,223.8 810.4,224.1" fill="none" stroke="#6f7a7c" stroke-width="0.9"/>
<polyline points="802.3,213.5 803.9,213.5 805.3,212.3" fill="none" stroke="#6f7a7c" stroke-width="0.9"/>
<polyline points="801.5,211.9 802.5,212.2 804.3,210.7" fill="none" stroke="#6f7a7c" stroke-width="0.9"/>
<polyline points="800.5,210.5 800.6,209.7 801.8,208.1" fill="none" stroke="#6f7a7c" stroke-width="0.9"/>
<polyline points="797.8,205.3 799.1,205.2" fill="none" stroke="#6f7a7c" stroke-width="0.9"/>
<polyline points="796.2,210.0 794.9,208.4" fill="none" stroke="#6f7a7c" stroke-width="0.9"/>
<polyline points="795.9,212.5 795.1,213.0 793.0,212.4" fill="none" stroke="#6f7a7c" stroke-width="0.9"/>
<polyline points="793.9,217.6 794.6,217.0" fill="none" stroke="#6f7a7c" stroke-width="0.9"/>
<polyline points="793.7,215.4 794.9,214.6 795.4,213.3" fill="none" stroke="#6f7a7c" stroke-width="0.9"/>
<polyline points="793.4,211.0 795.3,209.9" fill="none" stroke="#6f7a7c" stroke-width="0.9"/>
<polyline points="791.1,205.4 792.5,205.1" fill="none" stroke="#6f7a7c" stroke-width="0.9"/>
<polyline points="790.7,203.2 792.3,203.3 792.9,204.3" fill="none" stroke="#6f7a7c" stroke-width="0.9"/>
<polyline points="789.1,200.5 789.3,199.5" fill="none" stroke="#6f7a7c" stroke-width="0.9"/>
<polyline points="785.5,199.0 785.6,197.5" fill="none" stroke="#6f7a7c" stroke-width="0.9"/>
<polyline points="784.6,197.7 785.9,198.0" fill="none" stroke="#6f7a7c" stroke-width="0.9"/>
<polyline points="785.5,195.5 785.8,196.6 785.5,198.3" fill="none" stroke="#6f7a7c" stroke-width="0.9"/>
<polyline points="785.9,193.5 786.8,193.6" fill="none" stroke="#6f7a7c" stroke-width="0.9"/>
<polyline points="783.0,186.2 783.7,185.0" fill="none" stroke="#6f7a7c" stroke-width="0.9"/>
<polyline points="781.8,184.4 782.6,184.8 784.9,184.6" fill="none" stroke="#6f7a7c" stroke-width="0.9"/>
<polyline points="782.1,180.4 782.4,181.5" fill="none" stroke="#6f7a7c" stroke-width="0.9"/>
<polyline points="783.2,171.1 784.1,170.7" fill="none" stroke="#6f7a7c" stroke-width="0.9"/>
<polyline points="786.1,166.7 786.7,168.5" fill="none" stroke="#6f7a7c" stroke-width="0.9"/>
<polyline points="788.1,166.4 788.4,168.4 789.6,169.3" fill="none" stroke="#6f7a7c" stroke-width="0.9"/>
<polyline points="793.9,164.1 795.0,164.3 796.2,164.6" fill="none" stroke="#6f7a7c" stroke-width="0.9"/>
<polyline points="795.7,163.0 797.3,164.5" fill="none" stroke="#6f7a7c" stroke-width="0.9"/>
<polyline points="797.7,162.2 797.4,163.1 795.2,163.2" fill="none" stroke="#6f7a7c" stroke-width="0.9"/>
<polyline points="817.6,217.6 816.6,222 817.8,226" fill="none" stroke="#6f7a7c" stroke-width="1"/>
<ellipse cx="810" cy="231" rx="1.7" ry="3.2" transform="rotate(10 810 231)" fill="#8bbf93" stroke="#6f7a7c" stroke-width="1"/>
<polygon points="788.8,221.1 791.0,221.5 793.2,221.6 794.7,223.2 796.3,224.8 797.6,226.6 799.2,228.4 801.0,230.0 801.3,231.9 801.0,233.8 800.0,235.6 798.8,237.2 797.6,238.8 798.7,240.2 799.2,241.8 799.9,243.3 800.4,245.3 801.1,247.2 801.9,249.1 802.6,251.0 803.1,253.3 803.8,255.5 804.3,257.7 804.6,259.9 804.2,262.1 804.4,264.3 804.3,266.5 802.9,267.5 801.5,268.6 800.4,269.9 798.8,271.0 797.0,272.1 795.4,273.2 793.9,274.5 792.7,276.0 791.4,277.5 789.9,278.7 788.4,280.0 786.9,281.3 785.6,282.8 784.3,284.3 782.6,285.5 781.0,287.0 778.8,286.5 776.6,286.5 774.9,286.9 773.3,287.6 772.2,285.9 771.0,284.3 769.6,283.2 768.3,282.0 767.3,280.4 766.6,278.7 768.0,277.3 769.0,275.6 770.5,274.3 771.2,272.1 772.1,269.9 773.1,267.7 773.8,265.5 774.4,263.2 775.0,261.8 775.5,260.4 773.3,260.4 771.0,260.1 768.8,259.9 766.8,258.5 764.9,257.1 765.7,255.5 766.4,253.7 767.2,252.1 765.9,250.4 764.4,248.8 763.6,247.0 762.2,245.5 764.0,244.6 765.9,244.1 767.7,243.3 770.0,243.1 772.2,242.4 774.4,242.1 775.5,239.9 776.6,237.7 775.0,236.8 773.2,236.9 771.6,236.0 772.2,234.4 772.5,232.7 773.3,231.1 774.9,229.4 776.5,227.6 777.7,225.5 779.2,224.4 780.5,223.1 782.1,222.2 784.3,221.9 786.6,221.5" fill="#8bbf93" stroke="#6f7a7c" stroke-width="1.0" stroke-linejoin="round"/>
<polyline points="801.1,230.9 799.8,230.7" fill="none" stroke="#6f7a7c" stroke-width="0.9"/>
<polyline points="801.1,232.9 800.5,231.7 799.0,231.0" fill="none" stroke="#6f7a7c" stroke-width="0.9"/>
<polyline points="800.5,234.7 799.2,234.2" fill="none" stroke="#6f7a7c" stroke-width="0.9"/>
<polyline points="798.1,239.5 796.1,240.0" fill="none" stroke="#6f7a7c" stroke-width="0.9"/>
<polyline points="798.9,241.0 797.6,240.7 795.9,242.0" fill="none" stroke="#6f7a7c" stroke-width="0.9"/>
<polyline points="802.3,250.0 801.1,249.4" fill="none" stroke="#6f7a7c" stroke-width="0.9"/>
<polyline points="804.3,263.2 803.2,262.5" fill="none" stroke="#6f7a7c" stroke-width="0.9"/>
<polyline points="799.6,270.5 797.8,270.3 796.5,271.1" fill="none" stroke="#6f7a7c" stroke-width="0.9"/>
<polyline points="787.7,280.7 787.4,278.6" fill="none" stroke="#6f7a7c" stroke-width="0.9"/>
<polyline points="786.2,282.0 785.9,280.4 783.5,280.0" fill="none" stroke="#6f7a7c" stroke-width="0.9"/>
<polyline points="781.8,286.3 780.7,286.1" fill="none" stroke="#6f7a7c" stroke-width="0.9"/>
<polyline points="777.7,286.5 779.0,285.1 780.9,285.3" fill="none" stroke="#6f7a7c" stroke-width="0.9"/>
<polyline points="769.0,282.6 770.3,281.8" fill="none" stroke="#6f7a7c" stroke-width="0.9"/>
<polyline points="769.7,274.9 771.2,275.3 772.4,275.4" fill="none" stroke="#6f7a7c" stroke-width="0.9"/>
<polyline points="774.1,264.3 775.0,265.5" fill="none" stroke="#6f7a7c" stroke-width="0.9"/>
<polyline points="767.8,259.2 769.1,258.1 770.9,257.2" fill="none" stroke="#6f7a7c" stroke-width="0.9"/>
<polyline points="764.0,247.9 765.6,247.8 766.7,249.0" fill="none" stroke="#6f7a7c" stroke-width="0.9"/>
<polyline points="766.8,243.7 767.5,244.9" fill="none" stroke="#6f7a7c" stroke-width="0.9"/>
<polyline points="781.3,222.6 781.5,224.7" fill="none" stroke="#6f7a7c" stroke-width="0.9"/>
<polyline points="783.2,222.0 783.6,222.8 782.7,224.4" fill="none" stroke="#6f7a7c" stroke-width="0.9"/>
<polyline points="779.9,237.7 781,239.9 787.7,240.5 788.2,236.6 792.1,237.7 795.4,239.9 798.7,237.7" fill="none" stroke="#6f7a7c" stroke-width="1"/>
<polyline points="782,223 780,228 779.5,236" fill="none" stroke="#6f7a7c" stroke-width="1"/>
<polyline points="772,270 776,268 779,266" fill="none" stroke="#6f7a7c" stroke-width="1"/>
<polygon points="823.0,244.0 820.9,244.4 819.2,245.4 817.6,246.6 816.8,248.4 816.1,250.2 815.4,252.1 817.6,251.0 819.4,250.2 821.2,249.4 823.0,248.5 823.0,246.2" fill="#8bbf93" stroke="#6f7a7c" stroke-width="1.0" stroke-linejoin="round"/>
<polygon points="823.0,262.0 820.9,262.1 819.2,263.7 817.6,265.4 816.6,267.1 815.4,268.7 817.0,270.4 818.7,272.1 820.8,271.5 823.0,271.0 823.1,268.8 822.8,266.5 822.9,264.2" fill="#8bbf93" stroke="#6f7a7c" stroke-width="1.0" stroke-linejoin="round"/>
<rect x="819.4" y="295.5" width="1.8" height="2.5" fill="#6f7a7c"/>
<polygon points="823.0,401.0 821.0,402.0 819.9,403.5 818.2,404.6 817.0,406.0 815.6,407.3 814.5,408.9 813.4,410.5 812.1,412.0 812.3,413.8 812.8,415.6 814.4,416.1 816.0,416.3 816.7,418.5 817.4,420.6 818.3,422.2 819.0,423.9 819.6,425.6 820.0,428.0 821.5,428.0 823.0,428.0 822.9,425.5 823.0,423.1 823.1,420.6 823.3,418.2 822.7,415.7 823.0,413.3 822.7,410.8 822.8,408.4 823.2,405.9 823.0,403.5" fill="#8bbf93" stroke="#6f7a7c" stroke-width="1.0" stroke-linejoin="round"/>
<circle cx="599.5" cy="243" r="9.2" fill="#ffffff" opacity="0.85"/>
<path d="M593,233 L606,233 Q600.3,237 600.2,242.3 Q605,241.8 608.8,236 L608.8,250 Q605,244.2 600.2,243.7 Q600.3,249 606,253 L593,253 Q598.7,249 598.8,243.7 Q594,244.2 590.2,250 L590.2,236 Q594,241.8 598.8,242.3 Q598.7,237 593,233 Z" fill="#ee1010"/>
<path d="M593,233.3 H606 M593,252.7 H606" stroke="#b00808" stroke-width="0.8"/>
<!--/MAPCONTENT-->
</svg>

<!-- panels -->
<div class="abs panel" style="left:375px;top:437px;width:256px;height:96px;"></div>
<div class="abs panel" style="left:375px;top:541px;width:256px;height:96px;"></div>

<!--FLAGS-->
<svg class="abs" style="left:415px;top:453px" width="62" height="41" viewBox="0 0 62 41">
<rect x="0" y="0" width="62" height="41" fill="#dd0a0a"/>
<rect x="19.3" y="0" width="9.6" height="41" fill="#111"/>
<rect x="20.3" y="0" width="7.6" height="41" fill="#fff"/>
<rect x="22.2" y="0" width="3.6" height="41" fill="#000"/>
<rect x="0" y="15" width="62" height="10.2" fill="#111"/>
<rect x="0" y="16.1" width="62" height="8" fill="#fff"/>
<rect x="0" y="17.8" width="62" height="4.6" fill="#000"/>
<circle cx="24" cy="20.1" r="10.3" fill="#444"/>
<circle cx="24" cy="20.1" r="8.9" fill="#fff"/>
<circle cx="24" cy="20.1" r="7.6" fill="none" stroke="#999" stroke-width="0.5"/>
<path d="M20.6,14.7 L27.4,14.7 L25,19.1 L29.4,16.7 L29.4,23.5 L25,21.1 L27.4,25.5 L20.6,25.5 L23,21.1 L18.6,23.5 L18.6,16.7 L23,19.1 Z" fill="#111"/>
<circle cx="8.2" cy="7.7" r="3.6" fill="#e23a3a" stroke="#a33" stroke-width="0.6"/>
<path d="M7.4,4.6 H9 V6.9 H11.3 V8.5 H9 V10.8 H7.4 V8.5 H5.1 V6.9 H7.4 Z" fill="#222"/>
<rect x="0.5" y="0.5" width="61" height="40" fill="none" stroke="#8a5a5a" stroke-width="1" opacity="0.6"/>
</svg>
<svg class="abs" style="left:415px;top:557px" width="62" height="41" viewBox="0 0 62 41">
<rect x="0" y="0" width="62" height="41" fill="#fff"/>
<g>
<rect x="0.5" y="0.5" width="28.5" height="17" fill="#1414c8"/>
<path d="M0.5,0.5 L29,17.5 M29,0.5 L0.5,17.5" stroke="#fff" stroke-width="3.2"/>
<path d="M0.5,0.5 L29,17.5 M29,0.5 L0.5,17.5" stroke="#e02020" stroke-width="1.1"/>
<rect x="11" y="0.5" width="6.6" height="17" fill="#fff"/>
<rect x="0.5" y="5.4" width="28.5" height="6.4" fill="#fff"/>
<rect x="12.6" y="0.5" width="3.6" height="17" fill="#ee1010"/>
<rect x="0.5" y="6.8" width="28.5" height="3.7" fill="#e01818"/>
</g>
<rect x="29" y="0" width="4" height="41" fill="#ff0505"/>
<rect x="0" y="17.1" width="62" height="6.5" fill="#ee1212"/>
<rect x="29" y="0" width="4" height="41" fill="#ff0505" opacity="0.6"/>
<rect x="0.5" y="0.5" width="61" height="40" fill="none" stroke="#c4c8cc" stroke-width="1"/>
</svg>
<!--/FLAGS-->

<div class="abs bold" style="left:471px;top:508px;letter-spacing:0.25px;">Germany</div>
<div class="abs bold" style="left:459px;top:609px;letter-spacing:0.15px;">Great Britain</div>

<div class="abs radio on" style="left:552px;top:459px"></div><div class="abs t" style="left:570px;top:461px">Human</div>
<div class="abs radio" style="left:552px;top:486px"></div><div class="abs t" style="left:570px;top:488px">Computer</div>
<div class="abs radio" style="left:552px;top:563px"></div><div class="abs t" style="left:570px;top:565px">Human</div>
<div class="abs radio on" style="left:552px;top:590px"></div><div class="abs t" style="left:570px;top:592px">Computer</div>

<!-- group boxes -->
<div class="abs grp" style="left:639px;top:441px;width:87px;height:93px;"><div class="lbl">Force level</div></div>
<div class="abs grp" style="left:734px;top:441px;width:87px;height:93px;"><div class="lbl">Deployment</div></div>
<div class="abs grp" style="left:638px;top:545px;width:87px;height:93px;"><div class="lbl">Force level</div></div>
<div class="abs grp" style="left:733px;top:545px;width:87px;height:93px;"><div class="lbl">Deployment</div></div>

<div class="abs radio on" style="left:647px;top:454px"></div><div class="abs t" style="left:665px;top:455px">Historical</div>
<div class="abs radio" style="left:647px;top:482px"></div><div class="abs t" style="left:665px;top:483px">Variable</div>
<div class="abs radio" style="left:647px;top:510px"></div><div class="abs t" style="left:665px;top:511px">Maximum</div>
<div class="abs radio" style="left:742px;top:461px"></div><div class="abs t" style="left:760px;top:462px">Historical</div>
<div class="abs radio on" style="left:742px;top:503px"></div><div class="abs t" style="left:760px;top:504px">Variable</div>

<div class="abs radio on" style="left:646px;top:558px"></div><div class="abs t" style="left:664px;top:559px">Historical</div>
<div class="abs radio" style="left:646px;top:586px"></div><div class="abs t" style="left:664px;top:587px">Variable</div>
<div class="abs radio" style="left:646px;top:614px"></div><div class="abs t" style="left:664px;top:615px">Maximum</div>
<div class="abs radio" style="left:741px;top:565px"></div><div class="abs t" style="left:759px;top:566px">Historical</div>
<div class="abs radio on" style="left:741px;top:607px"></div><div class="abs t" style="left:759px;top:608px">Variable</div>

<!-- big buttons -->
<div class="abs btn" style="left:375px;top:646px;width:145px;height:33px;line-height:33px;"><span class="sc">Preferences</span></div>
<div class="abs btn" style="left:527px;top:645px;width:146px;height:33px;line-height:33px;"><span class="sc">Exit</span></div>
<div class="abs btn def" style="left:679px;top:645px;width:145px;height:33px;line-height:33px;"><span class="sc">Play</span></div>
</div>
</body>
</html>
